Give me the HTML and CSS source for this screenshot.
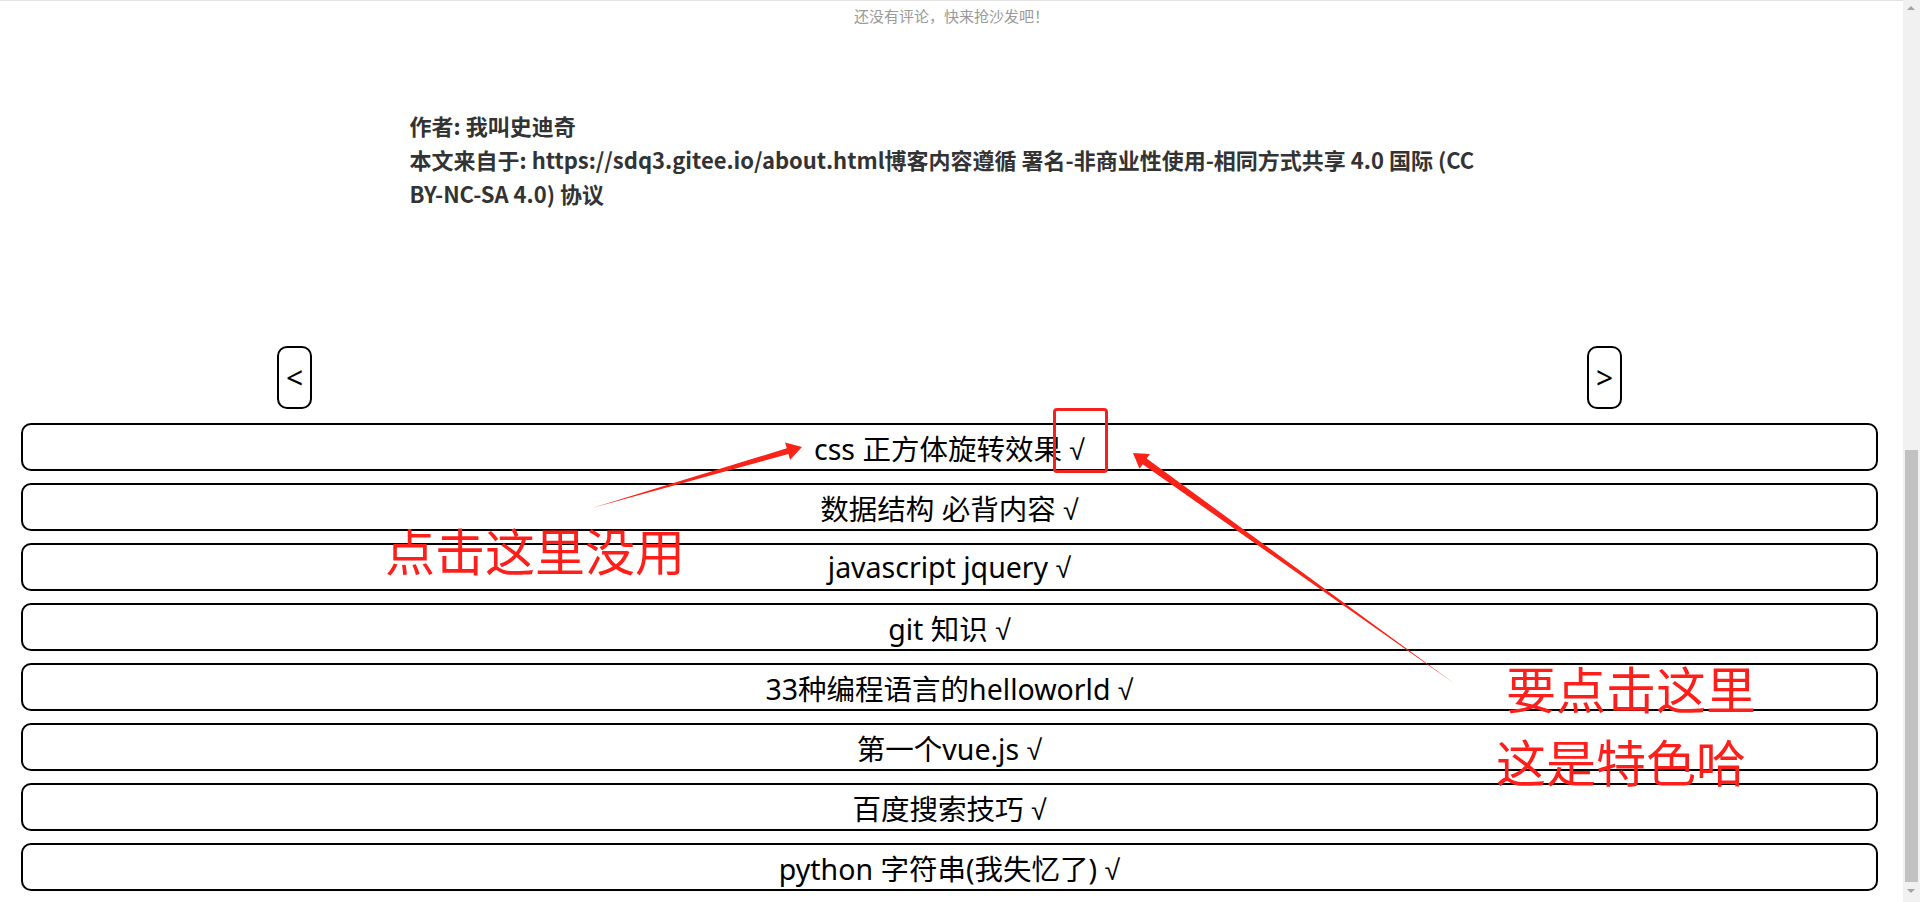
FILE: index.html
```html
<!DOCTYPE html>
<html lang="zh-CN">
<head>
<meta charset="utf-8">
<title>博客</title>
<link rel="stylesheet" href="styles.css">
</head>
<body>
<div class="page">
  <div class="comments">还没有评论，快来抢沙发吧！</div>

  <div class="license">
    <p>作者: 我叫史迪奇</p>
    <p>本文来自于: https://sdq3.gitee.io/about.html博客内容遵循 署名-非商业性使用-相同方式共享 4.0 国际 (CC<br>BY-NC-SA 4.0) 协议</p>
  </div>

  <div class="pager">
    <button class="pager-btn">&lt;</button>
    <button class="pager-btn">&gt;</button>
  </div>

  <ul class="list">
    <li class="item">css 正方体旋转效果 √</li>
    <li class="item">数据结构 必背内容 √</li>
    <li class="item">javascript jquery √</li>
    <li class="item">git 知识 √</li>
    <li class="item">33种编程语言的helloworld √</li>
    <li class="item">第一个vue.js √</li>
    <li class="item">百度搜索技巧 √</li>
    <li class="item">python 字符串(我失忆了) √</li>
  </ul>

  <div class="annot">
    <svg class="arrows" width="1920" height="902" viewBox="0 0 1920 902">
      <polygon points="592,508 786.8,448.3 785.1,442.6 802,447 790.1,459.8 788.4,454.1" />
      <polygon points="1455,684 1146.7,458.6 1149.9,454.1 1133,453 1139.5,468.7 1142.7,464.2" />
    </svg>
    <div class="mark-box"></div>
    <div class="note note-1">点击这里没用</div>
    <div class="note note-2">要点击这里</div>
    <div class="note note-3">这是特色哈</div>
  </div>

  <div class="scrollbar">
    <span class="sb-up"></span>
    <span class="sb-thumb"></span>
    <span class="sb-down"></span>
  </div>
</div>
</body>
</html>
```

FILE: styles.css
```css
html, body {
  margin: 0;
  padding: 0;
  background: #fff;
  overflow: hidden;
}

body {
  font-family: "Noto Sans", "Noto Sans CJK SC", sans-serif;
  color: #000;
}

.page {
  position: relative;
  width: 1903px;
  height: 902px;
}

.comments {
  border-top: 1px solid #e2e2e2;
  height: 29px;
  line-height: 29px;
  text-align: center;
  font-family: "Noto Sans CJK SC", sans-serif;
  font-size: 15px;
  color: #999;
}

.license {
  width: 1084px;
  margin: 78px auto 0;
  font-family: "Noto Sans CJK SC", sans-serif;
  font-size: 22px;
  font-weight: bold;
  line-height: 34px;
  color: #333;
}

.license p {
  margin: 0;
}

.pager {
  display: flex;
  justify-content: space-between;
  margin: 136px 281px 0 277px;
}

.pager-btn {
  width: 35px;
  height: 63px;
  padding: 0;
  border: 2px solid #000;
  border-radius: 10px;
  background: #fff;
  font-family: "Noto Sans", sans-serif;
  font-size: 30px;
  line-height: 1;
  color: #000;
}

.list {
  list-style: none;
  margin: 14px 0 0;
  padding: 0;
}

.item {
  box-sizing: border-box;
  height: 48px;
  margin: 0 25px 12px 21px;
  border: 2px solid #000;
  border-radius: 10px;
  display: flex;
  align-items: center;
  justify-content: center;
  font-family: "Noto Sans", "Liberation Sans", "Noto Sans CJK SC", sans-serif;
  font-size: 28.5px;
  white-space: nowrap;
}

.annot {
  position: absolute;
  top: 0;
  left: 0;
  width: 1920px;
  height: 902px;
  pointer-events: none;
}

.arrows {
  position: absolute;
  top: 0;
  left: 0;
}

.arrows polygon {
  fill: #fb2218;
}

.mark-box {
  position: absolute;
  left: 1053px;
  top: 408px;
  width: 49px;
  height: 59px;
  border: 3px solid #f2231c;
  border-radius: 4px;
}

.note {
  position: absolute;
  font-family: "Noto Sans CJK SC", sans-serif;
  font-size: 50px;
  line-height: 50px;
  color: #fe1f1a;
  white-space: nowrap;
}

.note-1 { left: 385px; top: 524px; }
.note-2 { left: 1506px; top: 662px; }
.note-3 { left: 1496px; top: 735px; }

.scrollbar {
  position: fixed;
  top: 0;
  right: 0;
  width: 17px;
  height: 902px;
  background: #f1f1f1;
}

.sb-thumb {
  position: absolute;
  left: 2px;
  top: 450px;
  width: 13px;
  height: 432px;
  background: #c1c1c1;
}

.sb-up,
.sb-down {
  position: absolute;
  left: 4px;
  width: 0;
  height: 0;
  border-left: 4px solid transparent;
  border-right: 4px solid transparent;
}

.sb-up {
  top: 6px;
  border-bottom: 4px solid #a3a3a3;
}

.sb-down {
  top: 889px;
  border-top: 4px solid #a3a3a3;
}
```
